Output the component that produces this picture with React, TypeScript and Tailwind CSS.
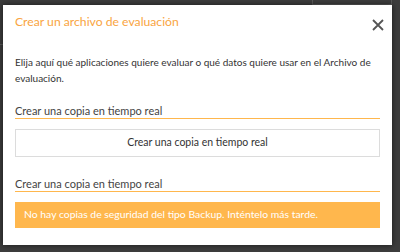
export default function App() {
  return (
    <div className="relative h-[252px] w-[400px] overflow-hidden bg-[#3d3d3d] font-['Lato',sans-serif]">
      <div className="absolute left-[312px] top-[-2px] h-[7px] w-[80px] border border-[#5a5a5a]" />
      <div className="absolute left-0 top-[44px] h-px w-[3px] bg-[#5a5a5a]" />
      <div className="absolute left-[3px] top-[5px] flex h-[240px] w-[389px] flex-col bg-white px-[12px] shadow-[0_0_6px_rgba(0,0,0,0.6)]">
        <div className="flex items-start justify-between pt-[10px]">
          <h2 className="text-[12.2px] leading-[14px] text-[#f9a441]">Crear un archivo de evaluación</h2>
          <svg width="12" height="12" viewBox="0 0 12 12" className="mr-[-4px] mt-[4px]">
            <path d="M1 1L11 11M11 1L1 11" stroke="#555" strokeWidth="1.8" />
          </svg>
        </div>
        <p className="mt-[23px] text-[10px] leading-[16px] text-[#333]">
          Elija aquí qué aplicaciones quiere evaluar o qué datos quiere usar en el Archivo de evaluación.
        </p>
        <div className="mt-[17px] border-b border-[#ffb74d] text-[11px] leading-[15px] text-[#444]">
          Crear una copia en tiempo real
        </div>
        <button className="mt-[10px] h-[28px] w-full border border-[#dcdcdc] bg-white text-[10.5px] text-[#333]">
          Crear una copia en tiempo real
        </button>
        <div className="mt-[19px] border-b border-[#ffb74d] text-[11px] leading-[15px] text-[#444]">
          Crear una copia en tiempo real
        </div>
        <div className="mt-[10px] flex h-[26px] items-center bg-[#ffb74d] px-[9px] text-[10.4px] text-white">
          No hay copias de seguridad del tipo Backup. Inténtelo más tarde.
        </div>
      </div>
    </div>
  );
}
